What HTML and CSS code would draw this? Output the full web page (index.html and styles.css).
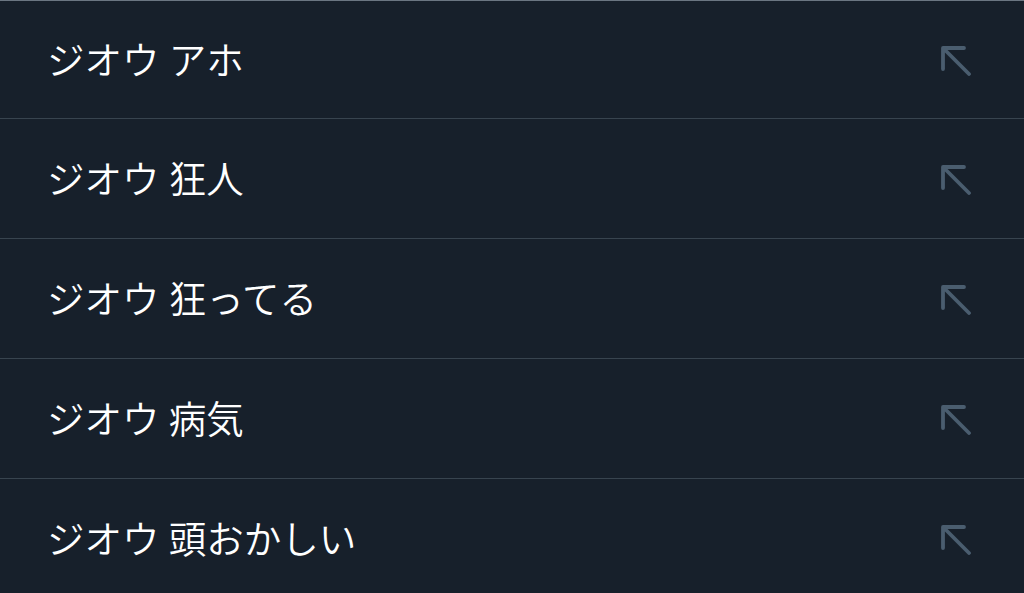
FILE: index.html
```html
<!DOCTYPE html>
<html lang="ja">
<head>
<meta charset="utf-8">
<link rel="stylesheet" href="styles.css">
</head>
<body>
<ul class="list">
  <li class="row"><span class="label">ジオウ アホ</span><svg class="arrow" viewBox="0 0 32 32"><path d="M3 4 H24 M3 4 V25 M4 5 L29 30"/></svg></li>
  <li class="row"><span class="label">ジオウ 狂人</span><svg class="arrow" viewBox="0 0 32 32"><path d="M3 4 H24 M3 4 V25 M4 5 L29 30"/></svg></li>
  <li class="row"><span class="label">ジオウ 狂ってる</span><svg class="arrow" viewBox="0 0 32 32"><path d="M3 4 H24 M3 4 V25 M4 5 L29 30"/></svg></li>
  <li class="row"><span class="label">ジオウ 病気</span><svg class="arrow" viewBox="0 0 32 32"><path d="M3 4 H24 M3 4 V25 M4 5 L29 30"/></svg></li>
  <li class="row"><span class="label">ジオウ 頭おかしい</span><svg class="arrow" viewBox="0 0 32 32"><path d="M3 4 H24 M3 4 V25 M4 5 L29 30"/></svg></li>
</ul>
</body>
</html>
```
FILE: styles.css
```css
html, body {
  margin: 0;
  padding: 0;
  background: #17202b;
  height: 100%;
  overflow: hidden;
}
.list {
  list-style: none;
  margin: 0;
  padding: 0;
  border-top: 1px solid #6b7682;
}
.row {
  display: flex;
  align-items: center;
  justify-content: space-between;
  height: 120px;
  box-sizing: border-box;
  border-bottom: 1px solid #38444f;
  padding: 0 52px 0 47px;
  background: #17202b;
}
.row:first-child {
  height: 118px;
}
.label {
  font-family: "Noto Sans CJK JP", sans-serif;
  font-size: 37.5px;
  font-weight: 350;
  color: #ffffff;
  line-height: 1;
  word-spacing: 1px;
  margin-bottom: 4px;
}
.arrow {
  width: 32px;
  height: 32px;
  fill: none;
  stroke: #4a5d6f;
  stroke-width: 3.8;
  stroke-linecap: round;
  stroke-linejoin: round;
}
```
